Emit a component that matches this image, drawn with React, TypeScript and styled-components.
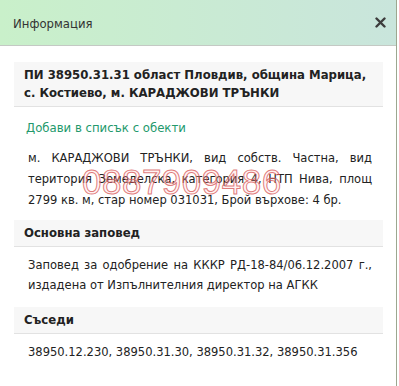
import React from 'react';
import styled, { createGlobalStyle } from 'styled-components';

const GlobalStyle = createGlobalStyle`
  html, body {
    margin: 0;
    padding: 0;
    background: #ffffff;
  }
  body {
    font-family: 'DejaVu Sans Condensed', 'DejaVu Sans', sans-serif;
    font-size: 13px;
    color: #222222;
  }
`;

interface SectionProps {
  title: string;
  gap: number;
  children: React.ReactNode;
}

const Section: React.FC<SectionProps> = ({ title, gap, children }) => (
  <>
    <SectionHead $gap={gap}>{title}</SectionHead>
    {children}
  </>
);

const App: React.FC = () => {
  return (
    <>
      <GlobalStyle />
      <Window>
        <Header>
          <HeaderTitle>Информация</HeaderTitle>
          <CloseButton aria-label="Затвори">
            <svg width="11" height="11" viewBox="0 0 11 11">
              <path d="M1.5 1.5 L9.5 9.5 M9.5 1.5 L1.5 9.5" stroke="#3c3c3c" strokeWidth="2.4" strokeLinecap="round" />
            </svg>
          </CloseButton>
        </Header>
        <Body>
          <SectionHead $gap={0}>
            ПИ 38950.31.31 област Пловдив, община Марица, с. Костиево, м. КАРАДЖОВИ ТРЪНКИ
          </SectionHead>
          <AddLink href="#">Добави в списък с обекти</AddLink>
          <Para $top={10} $lh={21}>
            м. КАРАДЖОВИ ТРЪНКИ, вид собств. Частна, вид територия Земеделска, категория 4, НТП Нива, площ
            2799 кв. м, стар номер 031031, Брой върхове: 4 бр.
            <Watermark aria-hidden="true">0887909486</Watermark>
          </Para>
          <Section title="Основна заповед" gap={10}>
            <Para $top={8} $lh={20}>
              Заповед за одобрение на КККР РД-18-84/06.12.2007 г., издадена от Изпълнителния директор на АГКК
            </Para>
          </Section>
          <Section title="Съседи" gap={12}>
            <Para $top={8} $lh={20}>
              38950.12.230, 38950.31.30, 38950.31.32, 38950.31.356
            </Para>
          </Section>
        </Body>
      </Window>
    </>
  );
};

export default App;

const Window = styled.div`
  width: 397px;
  height: 386px;
  border-right: 1px solid #9ca78f;
  background: #ffffff;
  box-sizing: border-box;
`;

const Header = styled.div`
  height: 45px;
  display: flex;
  align-items: center;
  justify-content: space-between;
  padding: 0 10px 0 13px;
  background: linear-gradient(to right, #c9f0ca, #c9e5dc);
  border-bottom: 1px solid #c4c9c4;
`;

const HeaderTitle = styled.span`
  font-size: 13px;
  color: #333333;
  margin-top: 2px;
`;

const CloseButton = styled.button`
  border: none;
  background: transparent;
  padding: 0;
  width: 11px;
  height: 11px;
  display: flex;
  cursor: pointer;
`;

const Body = styled.div`
  padding: 16px 13px 0 14px;
`;

const SectionHead = styled.div<{ $gap: number }>`
  background: #f7f7f7;
  border-bottom: 1px solid #e2e2e2;
  padding: 4px 10px;
  line-height: 18px;
  font-weight: bold;
  margin-top: ${({ $gap }) => $gap}px;
`;

const AddLink = styled.a`
  display: block;
  margin: 12px 0 0 12px;
  line-height: 18px;
  color: #23996c;
  text-decoration: none;
`;

const Para = styled.p<{ $top: number; $lh: number }>`
  position: relative;
  margin: ${({ $top }) => $top}px 0 0 0;
  padding: 0 11px 0 14px;
  font-size: 12.8px;
  line-height: ${({ $lh }) => $lh}px;
  text-align: justify;
`;

const Watermark = styled.span`
  position: absolute;
  left: 68px;
  top: 17px;
  font-family: 'Liberation Sans', Arial, sans-serif;
  font-size: 35px;
  line-height: 35px;
  letter-spacing: 0.5px;
  color: rgba(255, 205, 205, 0.25);
  -webkit-text-stroke: 1px rgba(215, 90, 90, 0.8);
  pointer-events: none;
`;
